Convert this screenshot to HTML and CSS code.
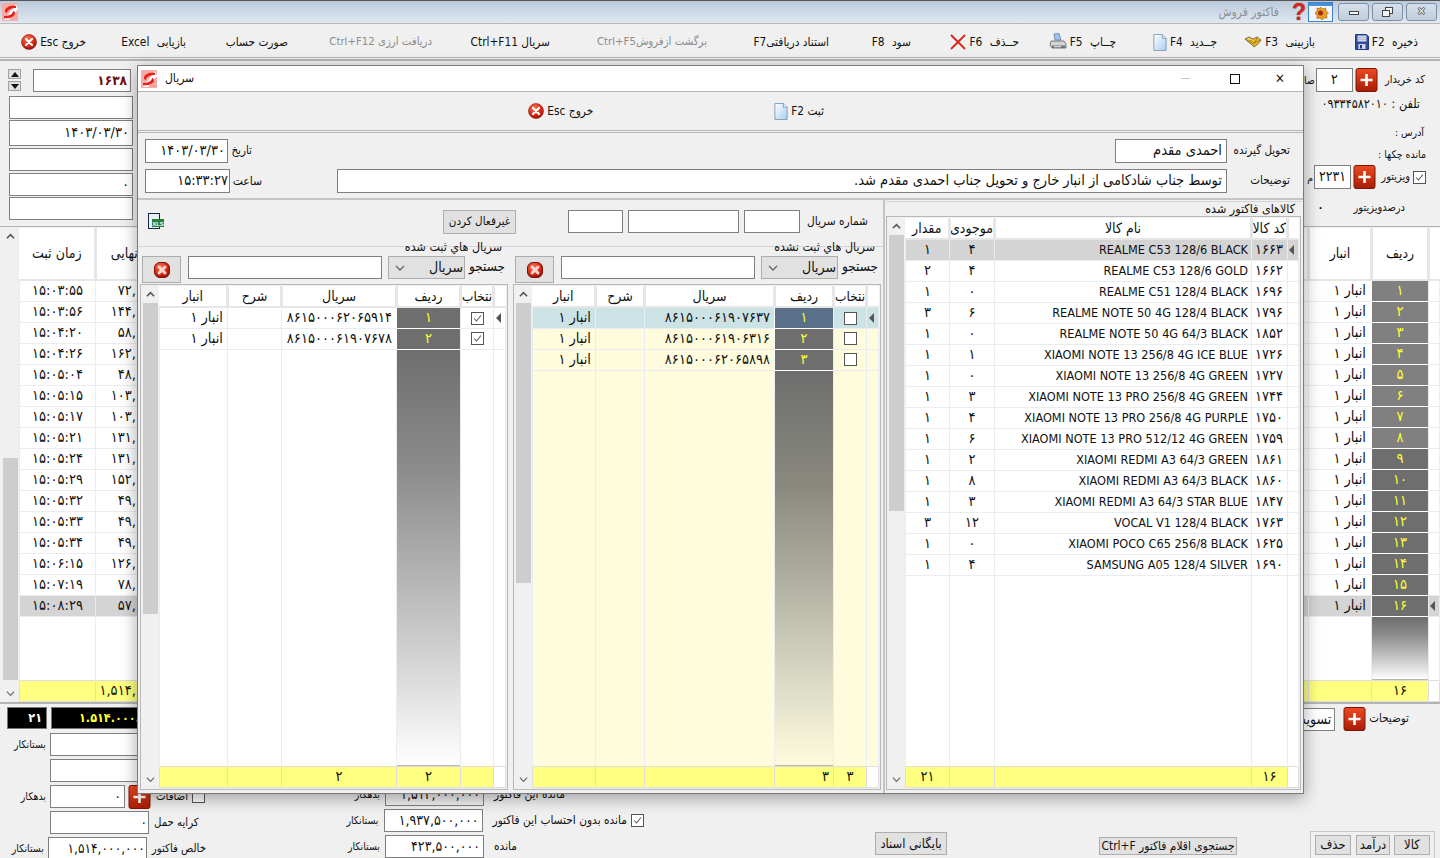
FILE: index.html
```html
<!DOCTYPE html>
<html lang="fa" dir="rtl">
<head>
  <meta charset="UTF-8">
  <title>فاکتور فروش</title>
  <link rel="stylesheet" href="styles.css">
</head>
<body>
  <svg class="defs" width="0" height="0">
    <defs>
      <radialGradient id="g-red" cx="40%" cy="30%" r="75%">
        <stop offset="0" stop-color="#f8765a"/><stop offset=".6" stop-color="#dc2a14"/><stop offset="1" stop-color="#8e1206"/>
      </radialGradient>
      <linearGradient id="g-page" x1="0" y1="0" x2="1" y2="1">
        <stop offset="0" stop-color="#fff"/><stop offset="1" stop-color="#a9cdec"/>
      </linearGradient>
      <linearGradient id="g-plus" x1="0" y1="0" x2="0" y2="1">
        <stop offset="0" stop-color="#ee4a22"/><stop offset="1" stop-color="#a81c06"/>
      </linearGradient>
      <symbol id="i-logo" viewBox="0 0 16 18">
        <rect width="16" height="18" rx="1" fill="#f8aaa4"/>
        <path d="M14 1L2 17h5L16 6z" fill="#fff"/>
        <path d="M14 3C9 2 3 4 3 8c0 1 1 2 2 2 0-3 4-5 9-5z" fill="#e6201a"/>
        <path d="M2 15c5 1 11-1 11-5 0-1-1-2-2-2 0 3-4 5-9 5z" fill="#e6201a"/>
      </symbol>
      <symbol id="i-exit" viewBox="0 0 16 16">
        <circle cx="8" cy="8" r="7.500" fill="url(#g-red)" stroke="#8e1206" stroke-width=".6"/>
        <path d="M5 5l6 6M11 5l-6 6" stroke="#fff" stroke-width="2.200" stroke-linecap="round"/>
      </symbol>
      <symbol id="i-stop" viewBox="0 0 16 16">
        <rect x=".5" y=".5" width="15" height="15" rx="5.500" fill="url(#g-red)" stroke="#7e1006"/>
        <path d="M5 5l6 6M11 5l-6 6" stroke="#f8d6d0" stroke-width="3" stroke-linecap="round"/>
      </symbol>
      <symbol id="i-plus" viewBox="0 0 22 24">
        <rect x=".5" y=".5" width="21" height="23" rx="2" fill="url(#g-plus)" stroke="#7c1505"/>
        <path d="M11 6v12M5 12h12" stroke="#fff" stroke-width="2.600"/>
      </symbol>
      <symbol id="i-page" viewBox="0 0 14 18">
        <path d="M.5.5h9l4 4v13H.5z" fill="url(#g-page)" stroke="#7f9db9"/>
        <path d="M9.500.5v4h4" fill="#e8f2fb" stroke="#7f9db9"/>
      </symbol>
      <symbol id="i-floppy" viewBox="0 0 14 16">
        <path d="M.5.5h11l2 2v13H.5z" fill="#2f4c9e" stroke="#233a80"/>
        <rect x="2.500" y="1.500" width="9" height="6" fill="#d4d9ea"/>
        <path d="M3 3.500h8M3 5.500h8" stroke="#aab2cf" stroke-width=".8"/>
        <rect x="3.500" y="10" width="7" height="5" fill="#d4d9ea"/>
        <rect x="5" y="11" width="2" height="3.500" fill="#233a80"/>
      </symbol>
      <symbol id="i-gem" viewBox="0 0 18 12">
        <path d="M1 3l4-2 4 2 4-2 4 3-3 4-4 3-3-3z" fill="#eab62c" stroke="#6d5a22" stroke-width=".8"/>
        <path d="M5 1l2 5M13 1l-2 6M1 3l9 5M17 4l-8 3" stroke="#8b6c16" stroke-width=".7" fill="none"/>
        <path d="M3 3l3-1 1 2z" fill="#fff0b0"/>
      </symbol>
      <symbol id="i-printer" viewBox="0 0 18 18">
        <path d="M5 1l5-.5 2 6.500H6z" fill="#9cc6ee" stroke="#5e7fa4" stroke-width=".8"/>
        <path d="M2 8h13l2 3v4H3l-2-3z" fill="#d2d4d8" stroke="#5a5e64" stroke-width=".8"/>
        <path d="M3 12.500h13v2.500H3z" fill="#70747a"/>
        <path d="M5 13.200h7v1H5z" fill="#f2f2f2"/>
      </symbol>
      <symbol id="i-cross" viewBox="0 0 16 16">
        <path d="M1 1l14 14M15 1L1 15" stroke="#d8241a" stroke-width="1.800"/>
      </symbol>
      <symbol id="i-tick" viewBox="0 0 13 13">
        <path d="M2.500 6.500l2.800 3L10.500 3" fill="none" stroke="#555" stroke-width="1.200"/>
      </symbol>
      <symbol id="i-app" viewBox="0 0 25 20">
        <rect x=".5" y=".5" width="24" height="19" fill="#f2f5fb" stroke="#3b80c8"/>
        <rect x="1" y="1" width="23" height="3" fill="#4a90d6"/>
        <path d="M12.500 5l2 2 3-1 .5 3 2.500 2-2 2 .5 3-3 0-2 2-2-2-3 .5 0-3-2-2.500 2-2 0-3 3 .5z" fill="#e8a01c" stroke="#a2560c" stroke-width=".6"/>
        <circle cx="12.500" cy="11" r="2.500" fill="#a8281a"/>
      </symbol>
      <symbol id="i-chevdown" viewBox="0 0 10 6">
        <path d="M1 1l4 4 4-4" fill="none" stroke="#666" stroke-width="1.300"/>
      </symbol>
      <symbol id="i-chevup" viewBox="0 0 10 6">
        <path d="M1 5l4-4 4 4" fill="none" stroke="#555" stroke-width="1.800"/>
      </symbol>
    </defs>
  </svg>

  <div class="app">
    <header class="titlebar" dir="ltr">
      <svg class="logo"><use href="#i-logo"/></svg>
      <div class="title-right">
        <span class="title-text">فاکتور فروش</span>
        <span class="title-help">?</span>
        <svg class="title-app"><use href="#i-app"/></svg>
        <div class="winbtn"><span class="min-glyph"></span></div>
        <div class="winbtn"><span class="max-glyph"></span></div>
        <div class="winbtn close-glyph">✕</div>
      </div>
    </header>

    <nav class="toolbar">
      <div class="tool"><svg class="ic-floppy"><use href="#i-floppy"/></svg><span>ذخیره F2</span></div>
      <div class="tool"><svg class="ic-gem"><use href="#i-gem"/></svg><span>بازبینی F3</span></div>
      <div class="tool"><svg class="ic-page"><use href="#i-page"/></svg><span>جــدید F4</span></div>
      <div class="tool"><svg class="ic-printer"><use href="#i-printer"/></svg><span>چــاپ F5</span></div>
      <div class="tool"><svg class="ic-cross"><use href="#i-cross"/></svg><span>حــذف F6</span></div>
      <div class="tool"><span class="spaced">سود F8</span></div>
      <div class="tool"><span>استناد دریافتیF7</span></div>
      <div class="tool muted"><span>برگشت ازفروشCtrl+F5</span></div>
      <div class="tool"><span>سریال Ctrl+F11</span></div>
      <div class="tool muted"><span>دریافت ارزی Ctrl+F12</span></div>
      <div class="tool"><span>صورت حساب</span></div>
      <div class="tool"><span class="spaced">بازیابی Excel</span></div>
      <div class="tool"><svg class="ic-exit"><use href="#i-exit"/></svg><span>خروج Esc</span></div>
    </nav>

    <section class="head">
      <div class="head-right">
        <div class="hrow hrow-buyer">
          <span class="lbl">کد خریدار</span>
          <svg class="plus"><use href="#i-plus"/></svg>
          <div class="field small num">۲</div>
          <span class="peek">صا</span>
        </div>
        <div class="hline hline-phone">تلفن : ۰۹۳۳۴۵۸۲۰۱۰</div>
        <div class="hline hline-addr">آدرس :</div>
        <div class="hline hline-check">مانده چکها :</div>
        <div class="hrow hrow-visitor">
          <span class="check on"><svg><use href="#i-tick"/></svg></span>
          <span class="lbl">ویزیتور</span>
          <svg class="plus"><use href="#i-plus"/></svg>
          <div class="field small num">۲۲۳۱</div>
          <span class="peek">م</span>
        </div>
        <div class="hrow hrow-percent">
          <span class="lbl">درصدویزیتور</span>
          <span class="percent-val">۰</span>
        </div>
      </div>
      <div class="head-left">
        <div class="doc-no">
          <div class="field doc-field">۱۶۳۸</div>
          <div class="spin">
            <span class="spin-btn"><i class="tri-up"></i></span>
            <span class="spin-btn"><i class="tri-down"></i></span>
          </div>
        </div>
        <div class="field h-23"></div>
        <div class="field h-26">۱۴۰۳/۰۳/۳۰</div>
        <div class="field h-23"></div>
        <div class="field h-23">۰</div>
        <div class="field h-23"></div>
      </div>
    </section>

    <section class="bg-grid">
      <div class="tbl-wrap">
        <table class="tbl">
          <colgroup>
            <col class="c-11"><col class="c-57"><col class="c-63"><col><col class="c-91"><col class="c-76">
          </colgroup>
          <thead>
            <tr class="tall"><th></th><th>ردیف</th><th>انبار</th><th></th><th>قیمت نهایی</th><th>زمان ثبت</th></tr>
          </thead>
          <tbody>
            <tr><td></td><td class="rn light">۱</td><td>انبار ۱</td><td></td><td class="ar">۷۲,۰۰۰,۰۰۰</td><td>۱۵:۰۳:۵۵</td></tr>
            <tr><td></td><td class="rn light">۲</td><td>انبار ۱</td><td></td><td class="ar">۱۴۴,۰۰۰,۰۰۰</td><td>۱۵:۰۳:۵۶</td></tr>
            <tr><td></td><td class="rn light">۳</td><td>انبار ۱</td><td></td><td class="ar">۵۸,۰۰۰,۰۰۰</td><td>۱۵:۰۴:۲۰</td></tr>
            <tr><td></td><td class="rn light">۴</td><td>انبار ۱</td><td></td><td class="ar">۱۶۲,۰۰۰,۰۰۰</td><td>۱۵:۰۴:۲۶</td></tr>
            <tr><td></td><td class="rn light">۵</td><td>انبار ۱</td><td></td><td class="ar">۴۸,۰۰۰,۰۰۰</td><td>۱۵:۰۵:۰۴</td></tr>
            <tr><td></td><td class="rn light">۶</td><td>انبار ۱</td><td></td><td class="ar">۱۰۳,۰۰۰,۰۰۰</td><td>۱۵:۰۵:۱۵</td></tr>
            <tr><td></td><td class="rn light">۷</td><td>انبار ۱</td><td></td><td class="ar">۱۰۳,۰۰۰,۰۰۰</td><td>۱۵:۰۵:۱۷</td></tr>
            <tr><td></td><td class="rn light">۸</td><td>انبار ۱</td><td></td><td class="ar">۱۳۱,۰۰۰,۰۰۰</td><td>۱۵:۰۵:۲۱</td></tr>
            <tr><td></td><td class="rn">۹</td><td>انبار ۱</td><td></td><td class="ar">۱۳۱,۰۰۰,۰۰۰</td><td>۱۵:۰۵:۲۴</td></tr>
            <tr><td></td><td class="rn">۱۰</td><td>انبار ۱</td><td></td><td class="ar">۱۵۲,۰۰۰,۰۰۰</td><td>۱۵:۰۵:۲۹</td></tr>
            <tr><td></td><td class="rn">۱۱</td><td>انبار ۱</td><td></td><td class="ar">۴۹,۰۰۰,۰۰۰</td><td>۱۵:۰۵:۳۲</td></tr>
            <tr><td></td><td class="rn">۱۲</td><td>انبار ۱</td><td></td><td class="ar">۴۹,۰۰۰,۰۰۰</td><td>۱۵:۰۵:۳۳</td></tr>
            <tr><td></td><td class="rn">۱۳</td><td>انبار ۱</td><td></td><td class="ar">۴۹,۰۰۰,۰۰۰</td><td>۱۵:۰۵:۳۴</td></tr>
            <tr><td></td><td class="rn">۱۴</td><td>انبار ۱</td><td></td><td class="ar">۱۲۶,۰۰۰,۰۰۰</td><td>۱۵:۰۶:۱۵</td></tr>
            <tr><td></td><td class="rn">۱۵</td><td>انبار ۱</td><td></td><td class="ar">۷۸,۰۰۰,۰۰۰</td><td>۱۵:۰۷:۱۹</td></tr>
            <tr class="sel-gray"><td><i class="arrow"></i></td><td class="rn dark">۱۶</td><td>انبار ۱</td><td></td><td class="ar">۵۷,۰۰۰,۰۰۰</td><td>۱۵:۰۸:۲۹</td></tr>
            <tr class="fill"><td></td><td class="fade"></td><td></td><td></td><td></td><td></td></tr>
          </tbody>
          <tfoot>
            <tr><td class="blank"></td><td>۱۶</td><td></td><td></td><td class="ar">۱,۵۱۴,۰۰۰,۰۰۰</td><td></td></tr>
          </tfoot>
        </table>
      </div>
      <div class="scroll bg-scroll">
        <svg class="chev"><use href="#i-chevup"/></svg>
        <div class="track"><div class="thumb"></div></div>
        <svg class="chev"><use href="#i-chevdown"/></svg>
      </div>
    </section>

    <footer class="foot">
      <div class="foot-right">
        <div class="note-row">
          <span class="lbl">توضیحات</span>
          <svg class="plus"><use href="#i-plus"/></svg>
          <div class="field note-field">تسویه</div>
        </div>
        <div class="btn-group">
          <span class="btn w-35">کالا</span>
          <span class="btn w-33">درآمد</span>
          <span class="btn w-36">حذف</span>
        </div>
      </div>
      <div class="btn search-btn">جستجوی اقلام فاکتور Ctrl+F</div>
      <div class="btn archive-btn">بایگانی اسناد</div>

      <div class="foot-mid">
        <div class="f-row">
          <span class="f-lbl">بدهکار</span>
          <div class="field amt gray">۱,۵۱۴,۰۰۰,۰۰۰</div>
          <span class="f-txt">مانده این فاکتور</span>
        </div>
        <div class="f-row">
          <span class="f-lbl">بستانکار</span>
          <div class="field amt">۱,۹۳۷,۵۰۰,۰۰۰</div>
          <span class="f-txt">مانده بدون احتساب این فاکتور</span>
          <span class="check on"><svg><use href="#i-tick"/></svg></span>
        </div>
        <div class="f-row">
          <span class="f-lbl">بستانکار</span>
          <div class="field amt">۴۲۳,۵۰۰,۰۰۰</div>
          <span class="f-txt">مانده</span>
        </div>
      </div>

      <div class="foot-left">
        <div class="f-row black-row">
          <div class="black-box count">۲۱</div>
          <div class="black-box total">۱.۵۱۴.۰۰۰.۰۰۰</div>
        </div>
        <div class="f-row">
          <span class="l-lbl">بستانکار</span>
          <div class="field wide"></div>
        </div>
        <div class="f-row">
          <span class="l-lbl"></span>
          <div class="field wide"></div>
        </div>
        <div class="f-row">
          <span class="l-lbl">بدهکار</span>
          <div class="field w-75">۰</div>
          <svg class="plus"><use href="#i-plus"/></svg>
          <span class="f-txt">اضافات</span>
          <span class="check"></span>
        </div>
        <div class="f-row">
          <span class="l-lbl"></span>
          <div class="field w-99">۰</div>
          <span class="f-txt">کرایه حمل</span>
        </div>
        <div class="f-row">
          <span class="l-lbl">بستانکار</span>
          <div class="field w-99">۱,۵۱۴,۰۰۰,۰۰۰</div>
          <span class="f-txt">خالص فاکتور</span>
        </div>
      </div>
    </footer>
  </div>

  <!-- پنجره سریال -->
  <div class="dialog">
    <div class="dlg-title" dir="ltr">
      <svg class="logo"><use href="#i-logo"/></svg>
      <span class="dlg-name">سریال</span>
      <div class="dlg-win">
        <span class="d-min"></span>
        <span class="d-max"></span>
        <span class="d-close">✕</span>
      </div>
    </div>

    <div class="dlg-tools">
      <div class="tool"><svg class="ic-page"><use href="#i-page"/></svg><span>ثبت F2</span></div>
      <div class="tool"><svg class="ic-exit"><use href="#i-exit"/></svg><span>خروج Esc</span></div>
    </div>

    <div class="dlg-form">
      <div class="form-row">
        <div class="pair">
          <span class="form-lbl">تحویل گیرنده</span>
          <div class="field recv">احمدی مقدم</div>
        </div>
        <div class="pair">
          <span class="date-lbl">تاریخ</span>
          <div class="field date-field">۱۴۰۳/۰۳/۳۰</div>
        </div>
      </div>
      <div class="form-row">
        <span class="form-lbl">توضیحات</span>
        <div class="field desc">توسط جناب شادکامی از انبار خارج و تحویل جناب احمدی مقدم شد.</div>
        <span class="time-lbl">ساعت</span>
        <div class="field time-field">۱۵:۳۳:۲۷</div>
      </div>
    </div>

    <div class="dlg-body">
      <section class="goods">
        <h4 class="group-title goods-title">کالاهای فاکتور شده</h4>
        <div class="frame goods-frame">
          <div class="tbl-wrap">
            <table class="tbl">
              <colgroup>
                <col class="c-11"><col class="c-36"><col><col class="c-45"><col class="c-44">
              </colgroup>
              <thead>
                <tr><th></th><th>کد کالا</th><th>نام کالا</th><th>موجودی</th><th>مقدار</th></tr>
              </thead>
              <tbody>
                <tr class="sel-gray"><td><i class="arrow"></i></td><td>۱۶۶۳</td><td class="ar">REALME C53 128/6 BLACK</td><td>۴</td><td>۱</td></tr>
                <tr><td></td><td>۱۶۶۲</td><td class="ar">REALME C53 128/6 GOLD</td><td>۴</td><td>۲</td></tr>
                <tr><td></td><td>۱۶۹۶</td><td class="ar">REALME C51 128/4 BLACK</td><td>۰</td><td>۱</td></tr>
                <tr><td></td><td>۱۷۹۶</td><td class="ar">REALME NOTE 50 4G 128/4 BLACK</td><td>۶</td><td>۳</td></tr>
                <tr><td></td><td>۱۸۵۲</td><td class="ar">REALME NOTE 50 4G 64/3 BLACK</td><td>۰</td><td>۱</td></tr>
                <tr><td></td><td>۱۷۲۶</td><td class="ar">XIAOMI NOTE 13 256/8 4G ICE BLUE</td><td>۱</td><td>۱</td></tr>
                <tr><td></td><td>۱۷۲۷</td><td class="ar">XIAOMI NOTE 13 256/8 4G GREEN</td><td>۰</td><td>۱</td></tr>
                <tr><td></td><td>۱۷۴۴</td><td class="ar">XIAOMI NOTE 13 PRO 256/8 4G GREEN</td><td>۳</td><td>۱</td></tr>
                <tr><td></td><td>۱۷۵۰</td><td class="ar">XIAOMI NOTE 13 PRO 256/8 4G PURPLE</td><td>۴</td><td>۱</td></tr>
                <tr><td></td><td>۱۷۵۹</td><td class="ar">XIAOMI NOTE 13 PRO 512/12 4G GREEN</td><td>۶</td><td>۱</td></tr>
                <tr><td></td><td>۱۸۶۱</td><td class="ar">XIAOMI REDMI A3 64/3 GREEN</td><td>۲</td><td>۱</td></tr>
                <tr><td></td><td>۱۸۶۰</td><td class="ar">XIAOMI REDMI A3 64/3 BLACK</td><td>۸</td><td>۱</td></tr>
                <tr><td></td><td>۱۸۴۷</td><td class="ar">XIAOMI REDMI A3 64/3 STAR BLUE</td><td>۳</td><td>۱</td></tr>
                <tr><td></td><td>۱۷۶۳</td><td class="ar">VOCAL V1 128/4 BLACK</td><td>۱۲</td><td>۳</td></tr>
                <tr><td></td><td>۱۶۲۵</td><td class="ar">XIAOMI POCO C65 256/8 BLACK</td><td>۰</td><td>۱</td></tr>
                <tr><td></td><td>۱۶۹۰</td><td class="ar">SAMSUNG A05 128/4 SILVER</td><td>۴</td><td>۱</td></tr>
                <tr class="fill"><td></td><td></td><td></td><td></td><td></td></tr>
              </tbody>
              <tfoot>
                <tr><td class="blank"></td><td>۱۶</td><td></td><td></td><td>۲۱</td></tr>
              </tfoot>
            </table>
          </div>
          <div class="scroll goods-scroll">
            <svg class="chev"><use href="#i-chevup"/></svg>
            <div class="track"><div class="thumb"></div></div>
            <svg class="chev"><use href="#i-chevdown"/></svg>
          </div>
        </div>
      </section>

      <div class="serials">
        <div class="serial-top">
          <span class="serial-lbl">شماره سریال</span>
          <div class="field w-56"></div>
          <div class="field w-111"></div>
          <div class="field w-55"></div>
          <div class="btn toggle-btn">غیرفعال کردن</div>
          <svg class="ic-xls" viewBox="0 0 16 17">
            <rect x=".5" y=".5" width="11" height="15" fill="#e8eefa" stroke="#1c2440"/>
            <rect x="4" y="6" width="12" height="8" fill="#2c7d32"/>
            <text x="10" y="12.500" class="xls-text">XLS</text>
          </svg>
        </div>

        <div class="serial-panels">
          <section class="panel panel-mid">
            <h4 class="group-title">سریال هاي ثبت نشده</h4>
            <div class="search-row">
              <span class="search-lbl">جستجو</span>
              <div class="combo"><span>سریال</span><svg class="ic-chev"><use href="#i-chevdown"/></svg></div>
              <div class="field search-input"></div>
              <div class="btn stop-btn"><svg class="ic-stop"><use href="#i-stop"/></svg></div>
            </div>
            <div class="frame">
              <div class="tbl-wrap">
                <table class="tbl cream">
                  <colgroup>
                    <col class="c-12"><col class="c-33"><col class="c-59"><col class="c-130"><col class="c-49"><col>
                  </colgroup>
                  <thead>
                    <tr><th></th><th class="clip">انتخاب</th><th>ردیف</th><th>سریال</th><th>شرح</th><th>انبار</th></tr>
                  </thead>
                  <tbody>
                    <tr class="sel-teal"><td><i class="arrow"></i></td><td><span class="check"></span></td><td class="rn blue">۱</td><td>۸۶۱۵۰۰۰۶۱۹۰۷۶۳۷</td><td></td><td>انبار ۱</td></tr>
                    <tr><td></td><td><span class="check"></span></td><td class="rn dark">۲</td><td>۸۶۱۵۰۰۰۶۱۹۰۶۳۱۶</td><td></td><td>انبار ۱</td></tr>
                    <tr><td></td><td><span class="check"></span></td><td class="rn dark">۳</td><td>۸۶۱۵۰۰۰۶۲۰۶۵۸۹۸</td><td></td><td>انبار ۱</td></tr>
                    <tr class="fill"><td></td><td></td><td class="fade fade-cream"></td><td></td><td></td><td></td></tr>
                  </tbody>
                  <tfoot>
                    <tr><td class="blank"></td><td>۳</td><td class="ar">۳</td><td></td><td></td><td></td></tr>
                  </tfoot>
                </table>
              </div>
              <div class="scroll mid-scroll">
                <svg class="chev"><use href="#i-chevup"/></svg>
                <div class="track"><div class="thumb"></div></div>
                <svg class="chev"><use href="#i-chevdown"/></svg>
              </div>
            </div>
          </section>

          <section class="panel panel-left">
            <h4 class="group-title">سریال هاي ثبت شده</h4>
            <div class="search-row">
              <span class="search-lbl">جستجو</span>
              <div class="combo"><span>سریال</span><svg class="ic-chev"><use href="#i-chevdown"/></svg></div>
              <div class="field search-input"></div>
              <div class="btn stop-btn"><svg class="ic-stop"><use href="#i-stop"/></svg></div>
            </div>
            <div class="frame">
              <div class="tbl-wrap">
                <table class="tbl">
                  <colgroup>
                    <col class="c-12"><col class="c-33"><col class="c-64"><col class="c-115"><col class="c-54"><col>
                  </colgroup>
                  <thead>
                    <tr><th></th><th class="clip">انتخاب</th><th>ردیف</th><th>سریال</th><th>شرح</th><th>انبار</th></tr>
                  </thead>
                  <tbody>
                    <tr><td><i class="arrow"></i></td><td><span class="check on"><svg><use href="#i-tick"/></svg></span></td><td class="rn dark">۱</td><td>۸۶۱۵۰۰۰۶۲۰۶۵۹۱۴</td><td></td><td>انبار ۱</td></tr>
                    <tr><td></td><td><span class="check on"><svg><use href="#i-tick"/></svg></span></td><td class="rn dark">۲</td><td>۸۶۱۵۰۰۰۶۱۹۰۷۶۷۸</td><td></td><td>انبار ۱</td></tr>
                    <tr class="fill"><td></td><td></td><td class="fade"></td><td></td><td></td><td></td></tr>
                  </tbody>
                  <tfoot>
                    <tr><td class="blank"></td><td></td><td>۲</td><td>۲</td><td></td><td></td></tr>
                  </tfoot>
                </table>
              </div>
              <div class="scroll left-scroll">
                <svg class="chev"><use href="#i-chevup"/></svg>
                <div class="track"><div class="thumb"></div></div>
                <svg class="chev"><use href="#i-chevdown"/></svg>
              </div>
            </div>
          </section>
        </div>
      </div>
    </div>
  </div>
</body>
</html>
```

FILE: styles.css
```css
* {
  box-sizing: border-box;
}

html, body {
  margin: 0;
  height: 858px;
  overflow: hidden;
}

body {
  position: relative;
  background: #f0f0f0;
  color: #111;
  font-family: "DejaVu Sans Condensed", "DejaVu Sans", sans-serif;
  font-size: 11.500px;
  line-height: 1.2;
}

.defs {
  position: absolute;
}

svg {
  display: block;
  flex: none;
}

.app {
  display: flex;
  flex-direction: column;
  height: 858px;
}

/* title bar */
.titlebar {
  display: flex;
  justify-content: space-between;
  align-items: center;
  height: 24px;
  padding: 0 3px 0 2px;
  border-top: 1px solid #555;
  border-bottom: 1px solid #b8b8b8;
  background: linear-gradient(#bccadb, #e0e9f2);
  flex: none;
}

.logo {
  width: 16px;
  height: 18px;
}

.title-right {
  display: flex;
  align-items: center;
}

.title-text {
  color: #8c8f93;
  font-size: 12px;
  margin-right: 13px;
}

.title-help {
  color: #d8261c;
  font: bold 23px "Liberation Sans", sans-serif;
  width: 14px;
  line-height: 20px;
  text-shadow: 0 0 1px #444;
}

.title-app {
  width: 25px;
  height: 20px;
  margin: 0 2px 0 2px;
}

.winbtn {
  width: 31px;
  height: 18px;
  margin-left: 3px;
  border: 1px solid #7f8fa3;
  border-radius: 3px;
  background: linear-gradient(#d6e0ec, #c0cddb);
  display: flex;
  align-items: center;
  justify-content: center;
}

.min-glyph {
  width: 10px;
  height: 4px;
  border: 1px solid #444;
  background: #f4f4f4;
  margin-top: 2px;
}

.max-glyph {
  width: 8px;
  height: 7px;
  margin: 3px 3px 0 0;
  border: 1px solid #444;
  background: #f4f4f4;
  box-shadow: 3px -3px 0 -1px #f4f4f4, 3px -3px 0 0 #444;
}

.close-glyph {
  color: #f4f4f4;
  font-size: 11px;
  font-weight: bold;
  text-shadow: 1px 0 0 #555, -1px 0 0 #555, 0 1px 0 #555, 0 -1px 0 #555;
}

/* main toolbar */
.toolbar {
  display: grid;
  grid-template-columns: 103px 98px 101px 97px 108px 82px 122px 157px 118px 144px 102px 100px 64px;
  align-items: center;
  height: 36px;
  padding: 3px 22px 0 0;
  border-bottom: 3px double #b4b4b4;
  font-size: 11.800px;
  flex: none;
}

.tool {
  display: flex;
  align-items: center;
  flex-direction: row-reverse;
  justify-content: flex-end;
  gap: 3px;
  white-space: nowrap;
}

.toolbar svg + span,
.toolbar .spaced {
  word-spacing: 4px;
}

.toolbar .ic-exit + span {
  word-spacing: 0;
}

.tool.muted {
  color: #8c8c8c;
  font-size: 11.300px;
}

.ic-floppy { width: 14px; height: 16px; }
.ic-gem { width: 18px; height: 12px; }
.ic-page { width: 14px; height: 17px; }
.ic-printer { width: 18px; height: 18px; }
.ic-cross { width: 16px; height: 16px; }
.ic-exit { width: 16px; height: 16px; }

/* top fields */
.head {
  display: flex;
  justify-content: space-between;
  height: 167px;
  padding-top: 1px;
  border-top: 1px solid #b4b4b4;
  border-bottom: 1px solid #b4b4b4;
  flex: none;
}

.field {
  background: #fff;
  border: 1px solid #7f7f7f;
  padding: 2px 3px;
  white-space: nowrap;
  overflow: hidden;
  flex: none;
}

.head-left {
  width: 124px;
  margin-left: 9px;
  padding-top: 7px;
  display: flex;
  flex-direction: column;
  gap: 1.700px;
}

.doc-no {
  display: flex;
  margin-bottom: 2px;
  margin-left: -1px;
}

.doc-field {
  width: 98px;
  height: 23px;
  margin-right: 2px;
  margin-left: 12px;
  color: #6e0f12;
  font-weight: bold;
  font-size: 13.500px;
}

.spin {
  display: flex;
  flex-direction: column;
  gap: 2px;
}

.spin-btn {
  width: 13px;
  height: 10px;
  background: #e1e1e1;
  border: 1px solid #a0a0a0;
  display: flex;
  align-items: center;
  justify-content: center;
}

.tri-up, .tri-down {
  width: 0;
  height: 0;
  border-left: 4px solid transparent;
  border-right: 4px solid transparent;
}

.tri-up { border-bottom: 5px solid #111; }
.tri-down { border-top: 5px solid #111; }

.h-23 { height: 23px; width: 124px; font-size: 14px; }
.h-26 { height: 26px; width: 124px; font-size: 14.500px; padding-top: 3px; }

.head-right {
  width: 136px;
  position: relative;
  padding-top: 6px;
  font-size: 10.500px;
}

.hrow {
  display: flex;
  align-items: center;
}

.lbl {
  white-space: nowrap;
}

.hrow-buyer { padding-right: 15px; }
.hrow-buyer .lbl { width: 42px; margin-left: 7px; font-size: 11px; }
.hrow-visitor { padding-right: 14px; margin-top: 3px; }
.hrow-percent { padding-right: 35px; margin-top: 12px; gap: 30px; font-size: 11px; }

.plus {
  width: 23px;
  height: 24px;
}

.small {
  width: 37px;
  height: 24px;
  margin-right: 2px;
  text-align: center;
  font-size: 14px;
  padding: 2px 2px;
}

.peek {
  margin-right: 1px;
  white-space: nowrap;
}

.hline {
  padding-right: 14px;
}

.hline-phone { margin-top: 4px; height: 27px; padding-right: 20px; font-size: 12.500px; }
.hline-addr { height: 25px; padding-top: 3px; padding-right: 16px; }
.hline-check { height: 14px; }

.check {
  display: inline-block;
  width: 13px;
  height: 13px;
  border: 1px solid #555;
  background: #fff;
  vertical-align: middle;
  flex: none;
}

.check svg {
  width: 11px;
  height: 11px;
}

.hrow-visitor .lbl {
  width: 29px;
  margin: 0 3px 0 5px;
  font-size: 11px;
}

.percent-val {
  font-weight: bold;
}

/* tables */
.tbl-wrap {
  flex: 1;
  min-width: 0;
  overflow: hidden;
}

.tbl {
  width: 100%;
  height: 100%;
  border-collapse: collapse;
  table-layout: fixed;
  background: #fff;
  font-size: 14.500px;
}

.tbl th {
  height: 21px;
  background: #fff;
  font-weight: normal;
  font-size: 14px;
  border-left: 3px solid #e6e6e6;
  border-bottom: 2px solid #e6e6e6;
  padding: 0;
  overflow: hidden;
  white-space: nowrap;
}

.tbl th:last-child {
  border-left: none;
}

.tbl .tall th {
  height: 52px;
}

.tbl .clip {
  direction: ltr;
  text-align: left;
  font-size: 13.500px;
}

.tbl tbody td {
  height: 21px;
  border: 1px solid #e9ecf1;
  padding: 0 4px;
  text-align: center;
  white-space: nowrap;
  overflow: hidden;
}

.tbl tbody .ar {
  text-align: right;
}

.goods .tbl tbody .ar {
  font-size: 12.600px;
  padding-right: 3px;
}

.panel .tbl tbody td:nth-child(4),
.panel .tbl tbody td:nth-child(6),
.bg-grid .tbl tbody td:nth-child(3) {
  text-align: right;
}

.bg-grid .tbl td:nth-child(3) {
  padding-right: 5px;
}

.tbl .fill td {
  height: auto;
  border-top: none;
  border-bottom: none;
  padding: 0;
}

.tbl tfoot td {
  height: 21px;
  background: #ffff80;
  border: 1px solid #dedede;
  text-align: center;
  padding: 0 4px;
  white-space: nowrap;
}

.tbl tfoot .ar {
  text-align: right;
}

.tbl tfoot .blank {
  background: #fff;
}

.tbl .rn {
  background: #6e6e6e;
  color: #ffff33;
  border-color: #fff;
}

.tbl .rn.light {
  background: #808080;
}

.tbl .rn.dark {
  background: #6e6e6e;
}

.tbl .rn.blue {
  background: #5a7088;
}

.tbl .fade {
  background: linear-gradient(#6e6e6e 0%, #8d8d8d 30%, #d4d4d4 75%, #fff 100%);
}

.cream tbody td,
.cream .fill td {
  background: #fffbdd;
}

.cream tbody .rn {
  background: #6e6e6e;
}

.cream tbody .rn.blue {
  background: #5a7088;
}

.tbl.cream .fade-cream {
  background: linear-gradient(#6e6e6e 0%, #8a8a80 30%, #d4d4c0 75%, #fffbdd 100%);
}

.cream tbody .sel-teal td {
  background: #cce3e6;
}

.cream tbody .sel-teal td.blue {
  background: #5a7088;
}

.sel-gray td {
  background: #d4d4d4;
}

.sel-gray td.rn {
  background: #6a6a6a;
}

.arrow {
  display: inline-block;
  width: 0;
  height: 0;
  border-top: 5px solid transparent;
  border-bottom: 5px solid transparent;
  border-right: 5px solid #555;
  vertical-align: middle;
}

.c-11 { width: 11px; }
.c-12 { width: 12px; }
.c-33 { width: 33px; }
.c-36 { width: 36px; }
.c-44 { width: 44px; }
.c-45 { width: 45px; }
.c-49 { width: 49px; }
.c-54 { width: 54px; }
.c-57 { width: 57px; }
.c-59 { width: 59px; }
.c-63 { width: 63px; }
.c-64 { width: 64px; }
.c-76 { width: 76px; }
.c-91 { width: 91px; }
.c-115 { width: 115px; }
.c-130 { width: 130px; }

/* scroll bars */
.scroll {
  width: 17px;
  display: flex;
  flex-direction: column;
  align-items: center;
  background: #f0f0f0;
  flex: none;
}

.chev {
  width: 9px;
  height: 17px;
  padding: 0;
  flex: none;
}

.track {
  flex: 1;
  width: 100%;
}

.thumb {
  width: 15px;
  margin: 0 auto;
  background: #cdcdcd;
}

.bg-scroll .track { padding-top: 213px; }
.bg-scroll .thumb { height: 222px; }
.goods-scroll .thumb { height: 276px; }
.mid-scroll .thumb { height: 280px; }
.left-scroll .thumb { height: 311px; }

/* invoice items behind the dialog */
.bg-grid {
  display: flex;
  height: 476px;
  padding-left: 2px;
  padding-top: 1px;
  flex: none;
  border-bottom: 1px solid #b4b4b4;
}

.bg-scroll .chev {
  height: 17px;
}

/* bottom of the invoice */
.foot {
  display: flex;
  align-items: flex-end;
  flex: 1;
  min-height: 0;
  padding-top: 2px;
  border-top: 1px solid #b4b4b4;
}

.foot-right {
  width: 137px;
  height: 100%;
  display: flex;
  flex-direction: column;
  justify-content: space-between;
  flex: none;
}

.note-row {
  display: flex;
  align-items: center;
  gap: 3px;
  padding-right: 31px;
  margin-top: 1px;
}

.note-field {
  width: 86px;
  height: 23px;
  margin-right: 5px;
  font-size: 14px;
  padding-top: 2px;
}

.btn-group {
  display: flex;
  gap: 4px;
  width: 125px;
  height: 27px;
  margin-right: 5px;
  padding: 3px 4px;
  border: 1px solid #c8c8c8;
  border-bottom: none;
  font-size: 13px;
}

.btn {
  display: flex;
  align-items: center;
  justify-content: center;
  background: #e1e1e1;
  border: 1px solid #adadad;
  white-space: nowrap;
  flex: none;
}

.w-35 { width: 36px; }
.w-33 { width: 34px; }
.w-36 { width: 36px; margin-right: 1px; }

.search-btn {
  width: 138px;
  height: 18px;
  margin-right: 66px;
  margin-bottom: 3px;
  font-size: 11.900px;
}

.archive-btn {
  width: 72px;
  height: 23px;
  margin-right: 152px;
  margin-bottom: 3px;
  font-size: 12.800px;
}

.foot-mid {
  width: 298px;
  margin-right: 231px;
  flex: none;
  display: flex;
  flex-direction: column;
  gap: 3px;
}

.foot-left {
  width: 210px;
  margin-right: 136px;
  height: 100%;
  flex: none;
  display: flex;
  flex-direction: column;
  gap: 3px;
}

.f-row {
  direction: ltr;
  display: flex;
  align-items: center;
  height: 23px;
  flex: none;
}

.f-lbl {
  width: 34px;
  text-align: right;
  margin-right: 5px;
  font-size: 10.500px;
}

.l-lbl {
  width: 46px;
  margin-right: 4px;
  text-align: right;
  font-size: 10.500px;
}

.f-txt {
  margin: 0 4px 0 5px;
  white-space: nowrap;
  font-size: 11.300px;
}

.foot-mid .f-txt {
  margin: 0 4px 0 10px;
  font-size: 11.800px;
}

.amt {
  width: 99px;
  height: 23px;
  direction: rtl;
  text-align: right;
  font-size: 14px;
  padding: 2px 3px;
}

.amt.gray {
  background: #f0f0f0;
}

.black-row {
  gap: 4px;
  padding-left: 7px;
  margin-bottom: 1px;
}

.black-box {
  background: #000;
  color: #ffff33;
  border: 1px solid #777;
  outline: 1px solid #000;
  outline-offset: -2px;
  height: 22px;
  text-align: left;
  font-weight: bold;
  font-size: 12.500px;
  padding: 2px 4px;
  white-space: nowrap;
  overflow: hidden;
  flex: none;
}

.count {
  width: 40px;
  color: #fff;
  text-align: right;
}

.total {
  width: 120px;
  padding-left: 27px;
}

.wide { width: 160px; height: 23px; }
.w-75 { width: 75px; height: 23px; text-align: right; margin-right: 3px; direction: rtl; font-size: 14px; }
.w-99 { width: 99px; height: 23px; text-align: right; direction: rtl; font-size: 13.600px; padding: 2px 1px; }

/* dialog window */
.dialog {
  position: absolute;
  left: 137px;
  top: 65px;
  width: 1167px;
  height: 729px;
  display: flex;
  flex-direction: column;
  background: #f0f0f0;
  border: 1px solid #7a7a7a;
  box-shadow: 0 4px 16px rgba(0, 0, 0, 0.35);
}

.dlg-title {
  display: flex;
  align-items: center;
  height: 26px;
  padding-left: 3px;
  background: #fff;
  border-bottom: 1px solid #b4b4b4;
  flex: none;
}

.dlg-name {
  margin-left: 8px;
  font-size: 12px;
}

.dlg-win {
  margin-left: auto;
  display: flex;
  align-items: center;
  color: #222;
}

.d-min {
  width: 9px;
  height: 1px;
  background: #c4c4c4;
  margin-right: 40px;
}

.d-max {
  width: 10px;
  height: 10px;
  border: 1px solid #111;
  margin-right: 35px;
}

.d-close {
  width: 12px;
  font-size: 13px;
  line-height: 1;
  margin-right: 16px;
}

.dlg-tools {
  display: flex;
  align-items: center;
  height: 41px;
  padding-right: 479px;
  gap: 181px;
  border-bottom: 3px double #b4b4b4;
  font-size: 11.800px;
  flex: none;
}

.dlg-form {
  height: 67px;
  padding: 6px 13px 0 7px;
  border-bottom: 2px solid #c4c4c4;
  display: flex;
  flex-direction: column;
  gap: 6px;
  flex: none;
}

.form-row {
  display: flex;
  align-items: center;
  justify-content: space-between;
}

.pair {
  display: flex;
  align-items: center;
}

.form-lbl {
  width: 63px;
  flex: none;
}

.recv {
  width: 112px;
  height: 24px;
  font-size: 14.500px;
  padding: 2px 4px;
}

.date-lbl {
  width: 24px;
  flex: none;
}

.date-field {
  width: 83px;
  height: 24px;
  font-size: 14.500px;
  padding: 2px 2px;
  text-align: right;
}

.desc {
  flex: 1;
  height: 24px;
  font-size: 14.500px;
  padding: 2px 4px;
}

.time-lbl {
  width: 32px;
  margin-right: 75px;
  flex: none;
  font-size: 12px;
}

.time-field {
  width: 85px;
  height: 24px;
  font-size: 14.500px;
  padding: 2px 1px;
  text-align: right;
}

.dlg-body {
  flex: 1;
  min-height: 0;
  display: flex;
}

.group-title {
  margin: 0;
  font-weight: normal;
  font-size: 12.400px;
  line-height: 13px;
  white-space: nowrap;
}

.goods {
  width: 418px;
  padding: 1px 1px 3px;
  border-right: none;
  display: flex;
  flex-direction: column;
  flex: none;
}

.goods-title {
  height: 15px;
  padding-right: 7px;
  border-top: 1px solid #d4d4d4;
  margin-top: 0;
}

.frame {
  flex: 1;
  min-height: 0;
  display: flex;
  border: 1px solid #b8b8b8;
  padding: 1px;
  background: #f0f0f0;
}

.goods-frame {
  margin: 0 1px 0 0;
}

.serials {
  flex: 1;
  min-width: 0;
  display: flex;
  flex-direction: column;
  border-right: 2px solid #c4c4c4;
}

.serial-top {
  display: flex;
  align-items: center;
  height: 46px;
  padding: 0 15px 3px 0;
  flex: none;
}

.serial-lbl {
  width: 62px;
  margin-left: 6px;
  flex: none;
  font-size: 11.800px;
  white-space: nowrap;
}

.w-56, .w-111, .w-55 { height: 23px; margin-left: 5px; }
.w-56 { width: 56px; }
.w-111 { width: 111px; }
.w-55 { width: 55px; }

.toggle-btn {
  width: 73px;
  height: 24px;
  margin-right: 47px;
  font-size: 11.600px;
}

.ic-xls {
  width: 16px;
  height: 17px;
  margin-right: auto;
  margin-left: 10px;
}

.xls-text {
  fill: #fff;
  font: bold 6px "Liberation Sans", sans-serif;
  text-anchor: middle;
}

.serial-panels {
  flex: 1;
  min-height: 0;
  display: flex;
  gap: 1px;
}

.panel {
  flex: 1;
  min-width: 0;
  display: flex;
  flex-direction: column;
  border-top: 1px solid #d4d4d4;
  padding: 0 2px 3px;
}

.panel .group-title {
  height: 0;
  padding-right: 6px;
  position: relative;
  top: -7px;
}

.search-row {
  display: flex;
  align-items: flex-start;
  height: 28px;
  margin-top: 9px;
  padding-right: 3px;
  flex: none;
}

.search-lbl {
  width: 40px;
  margin-top: 2px;
  flex: none;
  font-size: 13.500px;
}

.combo {
  width: 77px;
  height: 23px;
  background: #e1e1e1;
  border: 1px solid #adadad;
  display: flex;
  align-items: center;
  justify-content: space-between;
  padding: 0 1px 0 6px;
  font-size: 14px;
  flex: none;
}

.ic-chev {
  width: 10px;
  height: 6px;
}

.search-input {
  width: 194px;
  height: 23px;
  margin-right: 6px;
}

.stop-btn {
  width: 39px;
  height: 27px;
  margin-right: 7px;
}

.ic-stop {
  width: 16px;
  height: 16px;
}
```
